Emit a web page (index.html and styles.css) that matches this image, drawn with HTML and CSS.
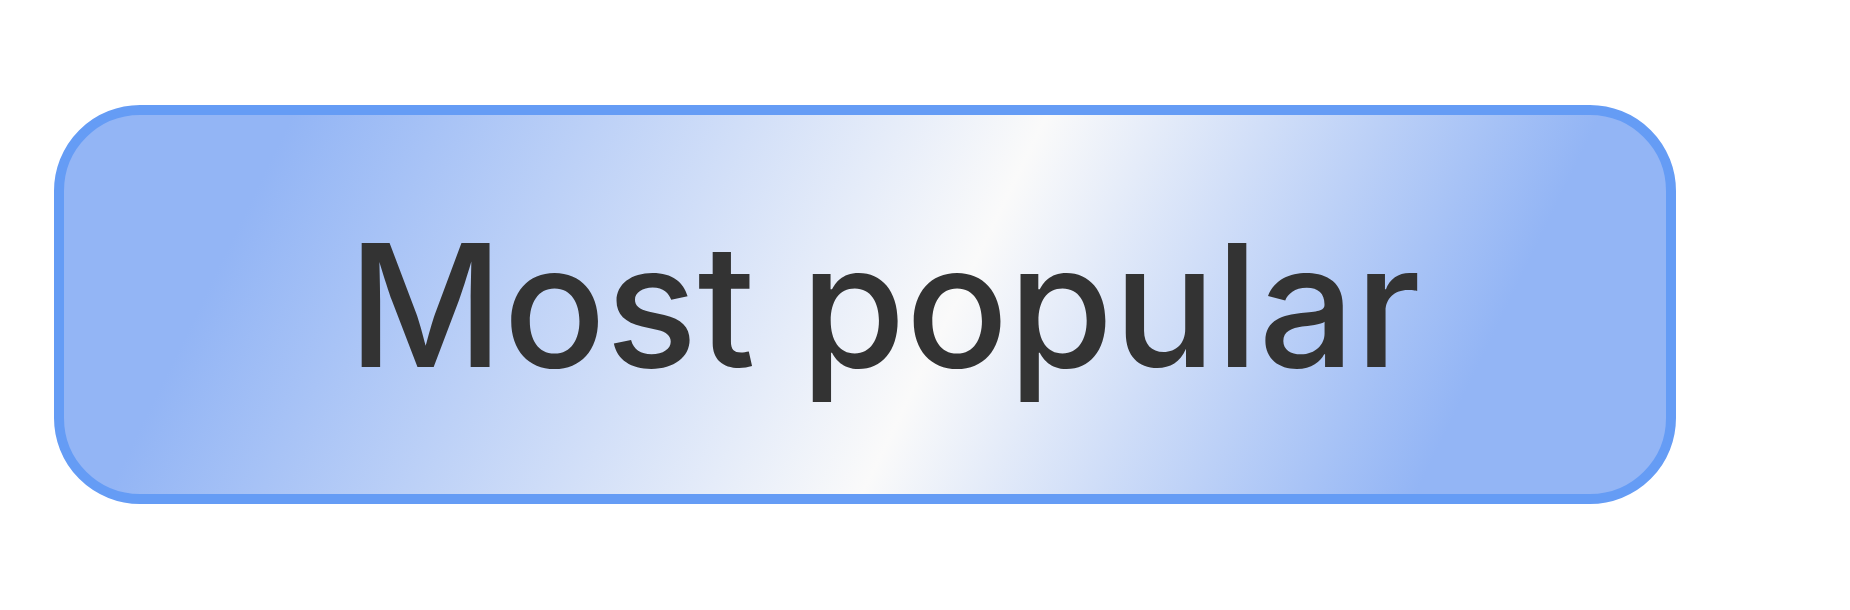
FILE: index.html
```html
<!DOCTYPE html>
<html lang="en">
<head>
<meta charset="utf-8">
<title>Most popular</title>
<link rel="stylesheet" href="styles.css">
</head>
<body>
<div class="stage">
  <div class="badge">
    <span class="badge-label">Most popular</span>
  </div>
</div>
</body>
</html>
```

FILE: styles.css
```css
html, body {
  margin: 0;
  padding: 0;
  background: #ffffff;
}

.stage {
  padding: 105px 0 0 54px;
}

.badge {
  box-sizing: border-box;
  width: 1622px;
  height: 399px;
  border: 10px solid #659cf5;
  border-radius: 86px;
  background: linear-gradient(116deg, #93b5f5 0%, #93b5f5 12.8%, #fafafa 55%, #93b5f5 86%, #93b5f5 100%);
  display: flex;
  align-items: center;
  padding-left: 284px;
}

.badge-label {
  font-family: Inter, "Noto Sans", sans-serif;
  font-size: 170px;
  font-weight: 500;
  color: #333333;
  line-height: 1.2;
  white-space: nowrap;
}
```
